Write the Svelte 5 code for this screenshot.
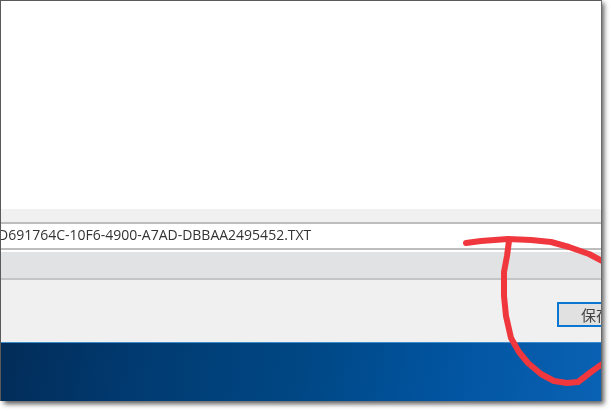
<script>
  const fileName = 'D691764C-10F6-4900-A7AD-DBBAA2495452.TXT';
</script>

<div class="page">
  <div class="window">
    <div class="list"></div>
    <div class="strip"></div>
    <div class="name-row"><span class="name">{fileName}</span></div>
    <div class="band"></div>
    <div class="actions">
      <button type="button" class="save">保存</button>
    </div>
    <div class="desktop"></div>

    <svg class="scribble" viewBox="0 0 601 401" width="601" height="401" aria-hidden="true">
      <path d="M465 243 L480 241 L507 239 L530 240 L550 242 L568 247 L588 254 L603 262" />
      <path d="M508 241 L506 256 L503 272 L503 296 L505 316 L510 338 L518 352 L527 363 L540 374 L553 381 L566 383 L577 382 L590 372 L604 362" />
    </svg>
  </div>
</div>

<style>
  :global(body) {
    margin: 0;
    background: #fff;
  }

  .page {
    width: 611px;
    height: 411px;
    overflow: hidden;
    background: #fff;
  }

  .window {
    position: relative;
    width: 600px;
    height: 401px;
    margin-left: 1px;
    display: flex;
    flex-direction: column;
    overflow: hidden;
    box-sizing: border-box;
    border-top: 1px solid #5a5a5a;
    box-shadow: -1px 0 0 #5a5a5a, 1px 0 0 #6a6a6a, 3px 3px 5px rgba(0, 0, 0, 0.65);
    filter: blur(0.5px);
  }

  .list {
    height: 208px;
    background: #fff;
  }

  .strip {
    height: 13px;
    background: #f0f0f0;
  }

  .name-row {
    height: 28px;
    box-sizing: border-box;
    padding-bottom: 4px;
    display: flex;
    align-items: center;
    overflow: hidden;
    background: #fff;
    border-top: 2px solid #bdbdbd;
    border-bottom: 2px solid #bdbdbd;
  }

  .name {
    margin-left: -3px;
    font: 14px "Open Sans", "Liberation Sans", sans-serif;
    color: #333;
    white-space: nowrap;
  }

  .band {
    height: 28px;
    box-sizing: border-box;
    margin-top: 2px;
    background: #e1e2e3;
    border-bottom: 2px solid #c4c4c4;
  }

  .actions {
    height: 62px;
    box-sizing: border-box;
    display: flex;
    justify-content: flex-end;
    padding-top: 22px;
    background: #f0f0f0;
    overflow: hidden;
  }

  .save {
    flex: none;
    width: 70px;
    height: 25px;
    margin-right: -26px;
    padding: 0 0 0 2px;
    text-align: left;
    text-indent: 20px;
    box-sizing: border-box;
    background: #e1e1e1;
    border: 2px solid #0a78d0;
    font: 15px "Noto Sans CJK SC", sans-serif;
    color: #444;
  }

  .desktop {
    flex: 1;
    border-top: 1px solid #3a8ccc;
    background: linear-gradient(100deg, #022c58 0%, #013a70 22%, #004784 50%, #01539e 72%, #0a62b4 100%);
  }

  .scribble {
    position: absolute;
    left: 0;
    top: -1px;
    fill: none;
    stroke: #f0373d;
    stroke-width: 6;
    stroke-linecap: round;
    stroke-linejoin: round;
  }
</style>
